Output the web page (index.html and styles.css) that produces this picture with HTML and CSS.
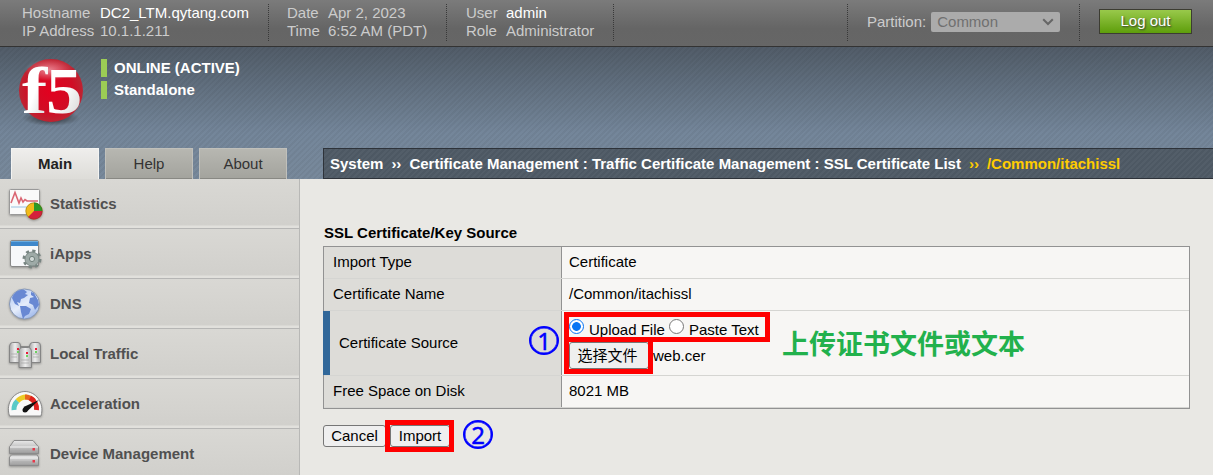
FILE: index.html
```html
<!DOCTYPE html>
<html lang="en">
<head>
<meta charset="utf-8">
<title>SSL Certificate List</title>
<link rel="stylesheet" href="styles.css">
</head>
<body>
<header class="topbar">
  <dl class="info info-host"><dt>Hostname</dt><dd class="strong">DC2_LTM.qytang.com</dd><dt>IP Address</dt><dd>10.1.1.211</dd></dl>
  <dl class="info info-date"><dt>Date</dt><dd>Apr 2, 2023</dd><dt>Time</dt><dd>6:52 AM (PDT)</dd></dl>
  <dl class="info info-user"><dt>User</dt><dd class="strong">admin</dd><dt>Role</dt><dd>Administrator</dd></dl>
  <div class="partition">
    <span>Partition:</span>
    <div class="select"><span>Common</span><svg width="12" height="8" viewBox="0 0 12 8"><path d="M1.2 1.2 6 6 10.8 1.2" fill="none" stroke="#666" stroke-width="2"/></svg></div>
  </div>
  <div class="logout-area"><button class="logout">Log out</button></div>
</header>
<div class="banner">
  <div class="device">
    <svg class="logo" width="72" height="76" viewBox="0 0 72 76">
      <defs>
        <radialGradient id="ball" cx=".5" cy=".5" r=".58" fx=".5" fy=".5"><stop offset="0" stop-color="#e3001f"/><stop offset=".6" stop-color="#d00d25"/><stop offset=".86" stop-color="#bd2432"/><stop offset="1" stop-color="#98202b"/></radialGradient>
        <radialGradient id="gloss"><stop offset="0" stop-color="#fff" stop-opacity=".5"/><stop offset="1" stop-color="#fff" stop-opacity="0"/></radialGradient>
        <radialGradient id="shade"><stop offset="0" stop-color="#111" stop-opacity=".8"/><stop offset="1" stop-color="#222" stop-opacity="0"/></radialGradient>
        <linearGradient id="letter" x2="1" y2="1"><stop offset=".5" stop-color="#fff"/><stop offset="1" stop-color="#ccc"/></linearGradient>
      </defs>
      <ellipse cx="36" cy="63" rx="29" ry="8" fill="url(#shade)"/>
      <ellipse cx="36" cy="35.500" rx="32" ry="31.500" fill="url(#ball)"/>
      <ellipse cx="34" cy="15" rx="24" ry="11" fill="url(#gloss)"/>
      <g class="logo-text" fill="url(#letter)"><text transform="translate(7 58) scale(1.15 1)" font-size="66">f</text><text transform="translate(31 58) scale(1.1 1)" font-size="66">5</text></g>
    </svg>
    <div class="status"><div>ONLINE (ACTIVE)</div><div>Standalone</div></div>
  </div>
  <nav class="tabs"><a class="tab active">Main</a><a class="tab">Help</a><a class="tab">About</a></nav>
  <div class="crumbs"><span>System</span><span>››</span><span>Certificate Management : Traffic Certificate Management : SSL Certificate List</span><span class="current">››</span><span class="current">/Common/itachissl</span></div>
</div>
<div class="page">
  <aside class="sidebar">
    <a class="item">
      <svg class="icon" viewBox="0 0 38 38">
        <rect x="2.5" y="4.5" width="30" height="25" rx="1" fill="#fafafa" stroke="#999"/><path d="M4 22H31" stroke="#b8d5e9" stroke-width="1.5"/><path d="M4 18 8 7.500 12 18 14 13 16 17 18 14.500 20 16H31" fill="none" stroke="#da6673" stroke-width="1.6"/>
        <circle cx="27" cy="26" r="8.5" fill="#f2ba19"/><path d="M27 26V17.5A8.5 8.5 0 0 1 35.5 26Z" fill="#2d9925"/><path d="M27 26H35.5A8.5 8.5 0 0 1 21 32Z" fill="#d4203b"/><circle cx="27" cy="26" r="8.2" fill="none" stroke="#4b4b24" stroke-opacity=".45" stroke-width=".8"/>
      </svg><span>Statistics</span></a>
    <a class="item">
      <svg class="icon" viewBox="0 0 38 38">
        <rect x="3.5" y="5.5" width="28" height="26" rx="1.5" fill="#f7f8fa" stroke="#888"/><path d="M4 6H31V11H4Z" fill="#3e87cb"/><path d="M4 6.5H31" stroke="#6bacdf"/>
        <circle cx="25" cy="24" r="8" fill="none" stroke="#788582" stroke-width="3" stroke-dasharray="3.14"/><circle cx="25" cy="24" r="7" fill="#9eaaa7" stroke="#7c8986"/><circle cx="25" cy="24" r="2.6" fill="#d0d8d6" stroke="#71807c"/>
      </svg><span>iApps</span></a>
    <a class="item">
      <svg class="icon" viewBox="0 0 38 38">
        <defs><linearGradient id="globe" x2=".6" y2="1"><stop offset="0" stop-color="#a9c2f1"/><stop offset=".6" stop-color="#e6edfb"/><stop offset="1" stop-color="#a5bdec"/></linearGradient></defs>
        <circle cx="17.5" cy="19" r="15" fill="url(#globe)" stroke="#8697b5"/><path d="M5 13C7 7 12 4.500 17 4.800L20 7 18 9 21 10 17 13 14 14 13 18 10 17 12 21 8 19ZM13 21 19 21 24 24 22 29 18 31 16 34 14 27ZM24 7 27 8 31 15 32 20 28 25 26 20 22 18 23 13 27 12 24 10Z" fill="#6888d3"/>
      </svg><span>DNS</span></a>
    <a class="item">
      <svg class="icon" viewBox="0 0 38 38">
        <defs><linearGradient id="tower" x2="1"><stop offset="0" stop-color="#a9a9a9"/><stop offset=".5" stop-color="#eee"/><stop offset="1" stop-color="#b2b2b2"/></linearGradient></defs>
        <path d="M12 12H24" stroke="#777" stroke-width="1.500"/>
        <g fill="url(#tower)" stroke="#858585"><path d="M2.500 11Q3 7.500 5.500 7.500H11Q13.500 7.500 13.500 11V27.500H2.500Z"/><path d="M22.500 11Q23 7.500 25.500 7.500H31Q33.500 7.500 33.500 11V27.500H22.500Z"/><path d="M12 16Q12.500 12.500 15 12.500H21.500Q24 12.500 24.500 16V32.500H12Z"/></g>
        <g stroke="#aaa" stroke-width=".8"><path d="M4 19H10M4 22H10M26 19H32M26 22H32M14 25H22M14 28H22"/></g><g fill="#ea1c36"><rect x="10" y="13" width="2" height="2"/><rect x="28" y="13" width="2" height="2"/><rect x="19" y="17" width="2" height="2"/></g><g fill="#6bd15f"><rect x="10" y="16" width="2" height="2"/><rect x="28" y="16" width="2" height="2"/><rect x="19" y="20" width="2" height="2"/></g>
      </svg><span>Local Traffic</span></a>
    <a class="item">
      <svg class="icon" viewBox="0 0 38 38">
        <path d="M2.500 31C-2 17 8 6.500 18 6.500S38 17 34 31Z" fill="#f8f8f8" stroke="#888"/>
        <g fill="none" stroke-width="5"><path d="M7 25A11.500 11.500 0 0 1 10.500 16" stroke="#59cac7"/><path d="M10.500 16A12 12 0 0 1 20 12" stroke="#eccb24"/><path d="M18 12A12 12 0 0 1 27 16" stroke="#e7641d"/><path d="M23 13A12 12 0 0 1 29.500 25" stroke="#df2020"/></g><path d="M16.500 22 32 15 19.500 27Z" fill="#111"/><circle cx="18" cy="25" r="2.500" fill="#111"/>
      </svg><span>Acceleration</span></a>
    <a class="item">
      <svg class="icon" viewBox="0 0 38 38">
        <defs><linearGradient id="rack" x2="0" y2="1"><stop offset="0" stop-color="#e9e9e9"/><stop offset=".6" stop-color="#bbb"/><stop offset="1" stop-color="#999"/></linearGradient></defs>
        <g fill="url(#rack)" stroke="#8b8b8b"><path d="M2.500 12 7 5.500H26L31.500 12V18.500H2.500Z"/><path d="M4.500 20H30L31.500 22V30.500H2.500V22Z"/></g><path d="M3 12H31M3 23H31" stroke="#f3f3f3"/><path d="M5 16H25M5 27H25" stroke="#aaa"/><rect x="25.500" y="13" width="2.500" height="2.500" fill="#e63748"/><rect x="25.500" y="25" width="2.500" height="2.500" fill="#e63748"/>
      </svg><span>Device Management</span></a>
  </aside>
  <main class="content">
    <h2>SSL Certificate/Key Source</h2>
    <div class="table">
      <div class="row"><div class="label">Import Type</div><div class="value">Certificate</div></div>
      <div class="row"><div class="label">Certificate Name</div><div class="value">/Common/itachissl</div></div>
      <div class="row source"><div class="label">Certificate Source</div><div class="value">
        <div class="choices"><i class="radio on"></i><span class="upload">Upload File</span><i class="radio"></i><span class="paste">Paste Text</span></div>
        <div class="file"><button class="btn choose">选择文件</button><span>web.cer</span></div>
      </div></div>
      <div class="row last"><div class="label">Free Space on Disk</div><div class="value">8021 MB</div></div>
    </div>
    <div class="actions"><button class="btn cancel">Cancel</button><button class="btn import">Import</button></div>
  </main>
</div>
<div class="mark mark-choices"></div>
<div class="mark mark-file"></div>
<div class="mark mark-import"></div>
<div class="step step-one">1</div>
<div class="step step-two">2</div>
<div class="note">上传证书文件或文本</div>
</body>
</html>
```
FILE: styles.css
```css
* { box-sizing: border-box; }
body { margin: 0; width: 1213px; height: 475px; overflow: hidden; position: relative; background: #e9e8e4; color: #000; font: 15px/18px "Liberation Sans", Arial, sans-serif; }
.topbar { height: 47px; display: flex; background: linear-gradient(#7b7b7b, #656565 62%, #666); border-bottom: 1px solid #333; color: #ccc; }
.info { margin: 4px 0 2px; height: 37px; display: grid; grid-template-rows: 18px 18px; align-content: start; border-right: 1px dotted #393939; white-space: nowrap; }
.info dd { margin: 0; }
.info .strong { color: #fff; }
.info-host { width: 269px; padding-left: 22px; grid-template-columns: 78px 1fr; }
.info-date { width: 178px; padding-left: 18px; grid-template-columns: 41px 1fr; }
.info-user { width: 167px; padding-left: 19px; grid-template-columns: 40px 1fr; }
.partition { margin: 4px 0 2px auto; height: 37px; width: 233px; padding-left: 19px; border-left: 1px dotted #393939; border-right: 1px dotted #393939; display: flex; align-items: center; gap: 5px; }
.select { width: 129px; height: 20px; margin-top: -1px; border-radius: 2px; background: #ababab; color: #707070; display: flex; align-items: center; justify-content: space-between; padding: 0 6px; }
.partition > span { margin-top: -1px; }
.logout-area { width: 133px; padding: 9px 0 0 19px; }
.logout { width: 93px; height: 25px; padding: 0 0 2px; border: 1px solid #3c3c32; background: linear-gradient(#99c94b, #5e9e0b); color: #fff; font: inherit; text-shadow: 1px 1px 2px #333; }
.banner { height: 132px; display: grid; grid-template: 101px 31px / 323px 1fr; background: repeating-linear-gradient(135deg, transparent 0 2px, rgba(0,0,0,.045) 2px 4px), linear-gradient(#515c68, #74869a 65%, #78899b); }
.device { grid-column: 1 / 3; display: flex; padding: 8px 0 0 15px; }
.logo { flex: none; overflow: visible; }
.logo-text { font-family: "Liberation Serif", serif; font-weight: bold; }
.status { margin: 4px 0 0 14px; display: flex; flex-direction: column; gap: 4px; color: #fff; font-weight: bold; }
.status div { height: 18px; border-left: 6px solid #9ccc55; padding-left: 7px; }
.tabs { display: flex; gap: 6px; padding-left: 11px; }
.tab { width: 88px; height: 31px; text-align: center; line-height: 30px; color: #333; background: linear-gradient(#b7b7b1, #a3a39d); border: solid #c0c0bb; border-width: 1px 1px 0; box-shadow: inset 0 -1px #888883; }
.tab.active { background: linear-gradient(#efeeec, #dddcd8); border-color: #f4f4f2; box-shadow: none; color: #222; font-weight: bold; }
.crumbs { height: 31px; border: 1px solid #2e333a; border-right: 0; background: repeating-linear-gradient(135deg, #535e69 0 2px, #4d5863 2px 4px); padding-left: 6px; display: flex; gap: 8px; line-height: 30px; color: #fff; font-weight: bold; white-space: nowrap; }
.crumbs .current { color: #fc0; }
.page { display: flex; height: 296px; }
.sidebar { width: 300px; flex: none; border-right: 1px solid #b8b8b6; }
.item { height: 50px; display: flex; align-items: center; padding-left: 7px; gap: 5px; background: linear-gradient(#d9d8d4, #d1d0cc 46px, #e1e0dc 47px); border-bottom: 1px solid #b6b6b5; color: #505050; font-weight: bold; }
.icon { width: 38px; height: 38px; flex: none; filter: drop-shadow(0 1px 1px rgba(0,0,0,.3)); }
.content { width: 890px; padding: 45px 0 0 23px; }
h2 { margin: 0 0 4px; font-size: 15px; line-height: 18px; padding-left: 1px; }
.table { width: 867px; border: 1px solid #929292; background: #f7f6f4; }
.row { display: flex; height: 32px; border-bottom: 1px solid #d5d5d2; }
.label { width: 238px; padding: 0 0 1px 9px; background: #dddcd8; border-right: 1px solid #929292; display: flex; align-items: center; }
.value { padding: 0 0 1px 7px; display: flex; align-items: center; }
.row.source { height: 65px; }
.source .label { width: 239px; margin-left: -1px; padding-bottom: 0; border-left: 7px solid #316799; }
.source .value { flex-direction: column; align-items: flex-start; padding: 7px 0 0 7px; }
.choices { display: flex; height: 22px; }
.radio { width: 15px; height: 15px; flex: none; margin-top: 1px; border: 1.500px solid #777; border-radius: 50%; background: #fff; }
.radio.on { border-color: #0875f4; background: radial-gradient(circle, #0875f4 0 4px, #fff 4.700px); }
.choices span { margin-top: 3px; white-space: nowrap; }
.upload { padding-left: 5px; width: 85px; }
.paste { padding-left: 5px; }
.file { display: flex; align-items: center; gap: 4px; margin-top: 2px; }
.btn { height: 22px; padding: 0; border: 1px solid #767676; border-radius: 3px; background: #efefef; color: #000; font: 15px/18px "Liberation Sans", "Noto Sans CJK SC", sans-serif; }
.choose { width: 80px; height: 27px; padding: 1px 3px 0 0; }
.actions { display: flex; gap: 4px; padding-top: 16px; }
.cancel { width: 63px; }
.import { width: 60px; }
.mark { position: absolute; border: 5px solid #f00; }
.mark-choices { left: 564px; top: 312px; width: 206px; height: 30px; }
.mark-file { left: 564px; top: 337px; width: 89px; height: 37px; }
.mark-import { left: 385px; top: 420px; width: 69px; height: 32px; }
.step { position: absolute; width: 30px; height: 29px; border: 2px solid #00f; border-radius: 50%; color: #00f; font: 24px/25px "Noto Sans", sans-serif; text-align: center; -webkit-text-stroke: .4px #00f; box-shadow: inset 0 0 0 .5px #00f; }
.step-one { left: 529px; top: 326px; }
.step-two { left: 463px; top: 420px; }
.note { position: absolute; left: 782px; top: 326px; color: #22b14c; font: bold 27px/34px "Noto Sans CJK SC", sans-serif; white-space: nowrap; }
```
